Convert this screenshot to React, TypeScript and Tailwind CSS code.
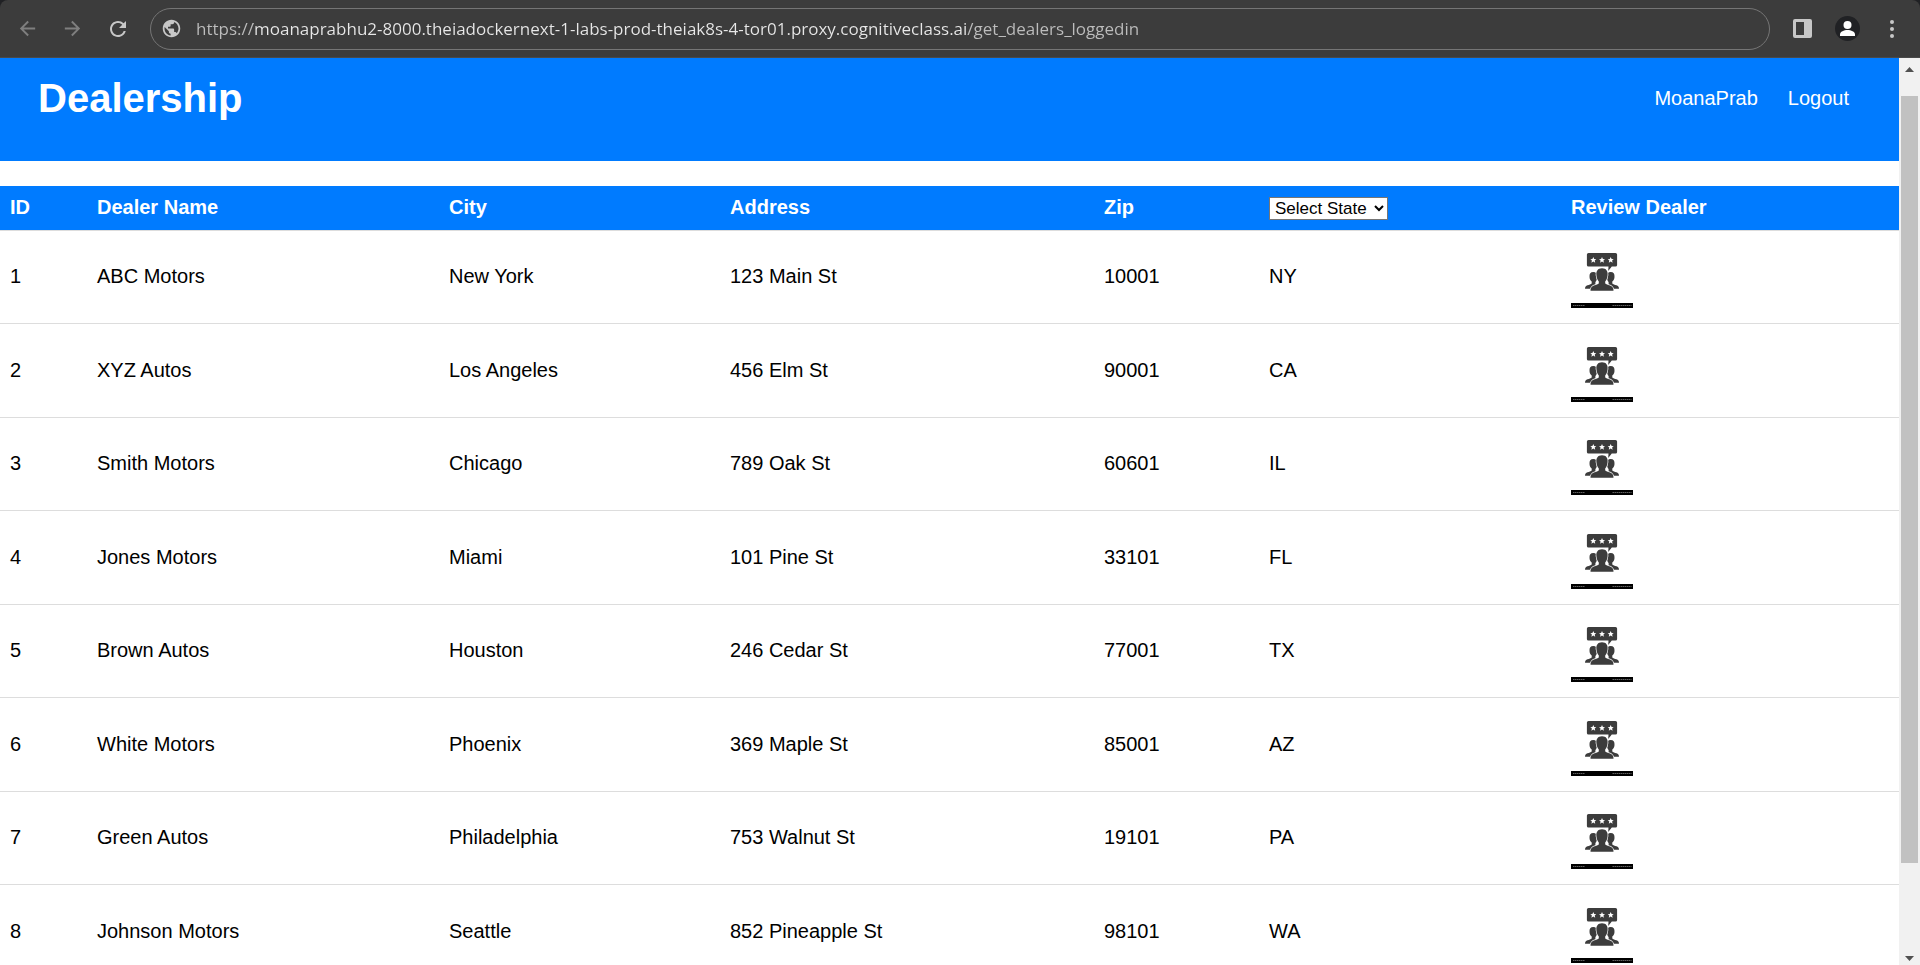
import { MdArrowBack, MdArrowForward, MdPublic, MdRefresh } from "react-icons/md";

type Dealer = {
  id: number;
  name: string;
  city: string;
  address: string;
  zip: string;
  state: string;
};

const dealers: Dealer[] = [
  { id: 1, name: "ABC Motors", city: "New York", address: "123 Main St", zip: "10001", state: "NY" },
  { id: 2, name: "XYZ Autos", city: "Los Angeles", address: "456 Elm St", zip: "90001", state: "CA" },
  { id: 3, name: "Smith Motors", city: "Chicago", address: "789 Oak St", zip: "60601", state: "IL" },
  { id: 4, name: "Jones Motors", city: "Miami", address: "101 Pine St", zip: "33101", state: "FL" },
  { id: 5, name: "Brown Autos", city: "Houston", address: "246 Cedar St", zip: "77001", state: "TX" },
  { id: 6, name: "White Motors", city: "Phoenix", address: "369 Maple St", zip: "85001", state: "AZ" },
  { id: 7, name: "Green Autos", city: "Philadelphia", address: "753 Walnut St", zip: "19101", state: "PA" },
  { id: 8, name: "Johnson Motors", city: "Seattle", address: "852 Pineapple St", zip: "98101", state: "WA" },
];

const star = "M0-3 .9-1 3-.8 1.4.6 1.9 2.7 0 1.6-1.9 2.7-1.4.6-3-.8-.9-1Z";

const sidePerson =
  "M22.3 25c2.8 0 4.2 2 4 5-.2 2.4-1 4-1.9 5v2c1 .9 3.4 1.4 5 2.3v2.4H14c0-1.900.9-2.900 2.500-3.500 1.700-.6 3.500-1 4.200-1.800v-1.800c-1.200-1-2.100-2.200-2.200-4.600-.2-3.200 1-5 3.800-5Z";

function ReviewIcon() {
  return (
    <svg viewBox="0 0 62 62" className="block size-[62px]" aria-hidden="true">
      <g fill="#3c3c3c">
        <path d="M17.5 6h27a1.6 1.6 0 0 1 1.6 1.6V18a1.6 1.6 0 0 1-1.6 1.6h-3.7L37.2 24l.3-4.4h-20a1.6 1.6 0 0 1-1.6-1.6V7.6A1.6 1.6 0 0 1 17.500 6Z" />
        <path d={sidePerson} />
        <path d={sidePerson} transform="translate(62 0) scale(-1 1)" />
        <path
          d="M31 21.200c4.300 0 5.900 2.900 5.600 6.700-.2 3-1.100 5.100-2.400 6.500v2.200c1.200 1.100 4.800 1.700 6.600 2.900 1.200.8 1.700 2.200 1.700 4.200h-23c0-2 .5-3.400 1.700-4.200 1.800-1.200 5.400-1.800 6.600-2.900v-2.200c-1.300-1.400-2.200-3.500-2.400-6.500-.3-3.800 1.300-6.700 5.600-6.700Z"
          stroke="#fff"
          strokeWidth="1.5"
          paintOrder="stroke"
        />
      </g>
      <g fill="#fff">
        <path d={star} transform="translate(22.3 13)" />
        <path d={star} transform="translate(31 13)" />
        <path d={star} transform="translate(39.7 13)" />
      </g>
      <path d="M0 56h62v5H0Z" fill="#000" />
      <path d="M2 58.500h12M41.500 58.500h19" stroke="#606060" strokeWidth="1" strokeDasharray="1.5 .5" />
    </svg>
  );
}

function BrowserBar() {
  return (
    <div className="bg-[#202124]">
      <div className="flex h-[58px] items-center rounded-t-lg border-b border-[#4a4a4a] bg-[#3c3c3c] pl-4 pr-4">
        <button aria-label="Back" className="flex w-[45px] text-[#7f7f7f]">
          <MdArrowBack size={23} />
        </button>
        <button aria-label="Forward" className="flex w-[45px] text-[#7f7f7f]">
          <MdArrowForward size={23} />
        </button>
        <button aria-label="Reload" className="flex w-[44px] text-[#c7c7c7]">
          <MdRefresh size={24} />
        </button>
        <div className="flex h-[42px] flex-1 items-center rounded-full border border-[#757575] pl-[10px]">
          <MdPublic size={21} className="text-[#c7c7c7]" />
          <input
            aria-label="Address"
            readOnly
            className="ml-[14px] h-8 flex-1 bg-[linear-gradient(90deg,#bdbdbd_57px,#e8e8e8_57px,#e8e8e8_771px,#bdbdbd_771px)] bg-clip-text font-['Open_Sans',sans-serif] text-[17px] text-transparent outline-none"
            value="https://moanaprabhu2-8000.theiadockernext-1-labs-prod-theiak8s-4-tor01.proxy.cognitiveclass.ai/get_dealers_loggedin"
          />
        </div>
        <div className="flex items-center pl-[23px]">
          <button aria-label="Side panel" className="flex">
            <svg viewBox="0 0 19 19" className="size-[19px]">
              <path d="M2 0h15a2 2 0 0 1 2 2v15a2 2 0 0 1-2 2H2a2 2 0 0 1-2-2V2a2 2 0 0 1 2-2Zm1 3v13h8V3Z" fill="#c7c7c7" fillRule="evenodd" />
            </svg>
          </button>
          <button aria-label="Profile" className="ml-[23px] flex">
            <svg viewBox="0 0 25 25" className="size-[25px]">
              <circle cx="12.5" cy="12.5" r="12.5" fill="#202124" />
              <circle cx="12.5" cy="9" r="4" fill="#fff" />
              <path d="M5 20v-1.5c0-3 4-4.500 7.500-4.500s7.500 1.500 7.500 4.500V20Z" fill="#fff" />
            </svg>
          </button>
          <button aria-label="Menu" className="ml-5 flex">
            <svg viewBox="0 0 24 24" className="size-6" fill="#c7c7c7">
              <circle cx="12" cy="5" r="2" />
              <circle cx="12" cy="12" r="2" />
              <circle cx="12" cy="19" r="2" />
            </svg>
          </button>
        </div>
      </div>
    </div>
  );
}

function Scrollbar() {
  return (
    <div className="flex w-[21px] shrink-0 flex-col bg-[#f1f1f1]">
      <button aria-label="Scroll up" className="flex h-[23px] items-center justify-center">
        <svg viewBox="0 0 9 5" className="h-[5px] w-[9px]">
          <path d="M0 5 4.5 0 9 5Z" fill="#505050" />
        </svg>
      </button>
      <div className="flex flex-1 flex-col px-[2px] pb-[89px] pt-[15px]">
        <div className="flex-1 bg-[#c1c1c1]" />
      </div>
      <button aria-label="Scroll down" className="flex h-[13px] items-center justify-center">
        <svg viewBox="0 0 9 5" className="h-[5px] w-[9px]">
          <path d="M0 0h9L4.5 5Z" fill="#505050" />
        </svg>
      </button>
    </div>
  );
}

export default function App() {
  return (
    <div className="flex h-screen flex-col overflow-hidden bg-white font-['Liberation_Sans',Arial,sans-serif] text-[20px] leading-6 text-black">
      <BrowserBar />
      <div className="flex min-h-0 flex-1">
        <main className="min-w-0 flex-1 overflow-hidden">
          <header className="flex h-[103px] items-start justify-between bg-[#007bff] pl-[38px] pr-[50px] pt-4 text-white">
            <h1 className="text-[40px] font-bold leading-[48px]">Dealership</h1>
            <nav className="flex gap-[30px] pt-3">
              <a href="#profile">MoanaPrab</a>
              <a href="#logout">Logout</a>
            </nav>
          </header>
          <table className="mt-[25px] w-full table-fixed border-separate border-spacing-0 text-left">
            <colgroup>
              <col className="w-[87px]" />
              <col className="w-[352px]" />
              <col className="w-[281px]" />
              <col className="w-[374px]" />
              <col className="w-[165px]" />
              <col className="w-[302px]" />
              <col className="w-[338px]" />
            </colgroup>
            <thead>
              <tr className="h-[45px] bg-[#007bff] text-white *:border-b *:border-[#ddd] *:px-[10px] *:pb-[2px]">
                <th>ID</th>
                <th>Dealer Name</th>
                <th>City</th>
                <th>Address</th>
                <th>Zip</th>
                <th>
                  <select
                    aria-label="Select State"
                    defaultValue=""
                    className="mt-[3px] block h-[23px] w-[119px] border border-[#767676] bg-white pl-[1px] text-[17px] font-normal leading-5 text-black"
                  >
                    <option value="">Select State</option>
                    {dealers.map((d) => (
                      <option key={d.id}>{d.state}</option>
                    ))}
                  </select>
                </th>
                <th>Review Dealer</th>
              </tr>
            </thead>
            <tbody>
              {dealers.map((d) => (
                <tr
                  key={d.id}
                  className="odd:h-[93px] even:h-[94px] *:border-b *:border-[#ddd] *:px-[10px] *:pb-[2px] *:last:pb-0 *:last:pt-[2px]"
                >
                  <td>{d.id}</td>
                  <td>{d.name}</td>
                  <td>{d.city}</td>
                  <td>{d.address}</td>
                  <td>{d.zip}</td>
                  <td>{d.state}</td>
                  <td>
                    <a href={`#review-${d.id}`} aria-label={`Review ${d.name}`} className="block w-[62px]">
                      <ReviewIcon />
                    </a>
                  </td>
                </tr>
              ))}
            </tbody>
          </table>
        </main>
        <Scrollbar />
      </div>
    </div>
  );
}
